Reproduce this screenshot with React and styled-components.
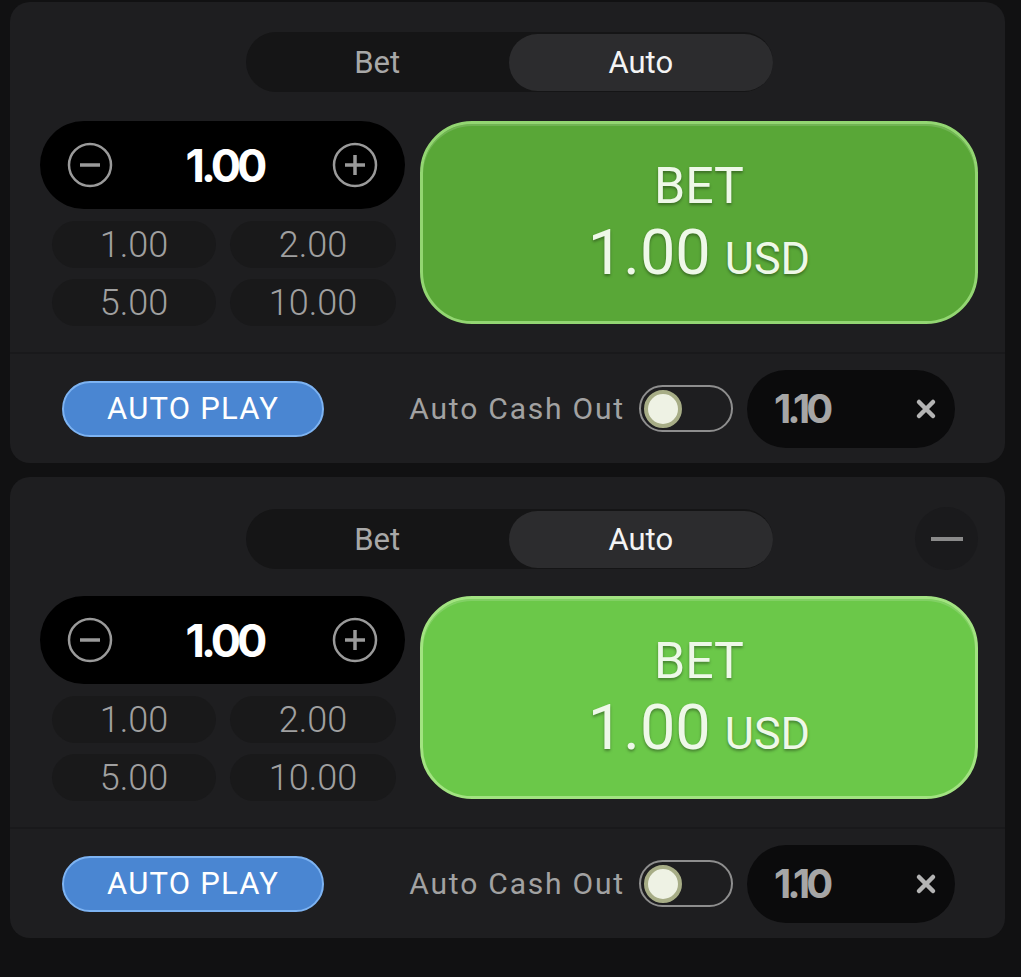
import React from 'react';
import styled, { createGlobalStyle } from 'styled-components';

const GlobalStyle = createGlobalStyle`
	html, body {
		margin: 0;
		padding: 0;
		background: #111112;
	}
	body {
		font-family: Roboto, "Liberation Sans", Arial, sans-serif;
	}
`;

const Page = styled.div`
	width: 1021px;
	height: 977px;
	padding: 2px 16px 0 10px;
	box-sizing: border-box;
	display: flex;
	flex-direction: column;
	gap: 14px;
`;

const Panel = styled.div`
	background: #1e1e20;
	border-radius: 20px;
	display: flex;
	flex-direction: column;
	overflow: hidden;
`;

const PanelTop = styled.div`
	padding: 30px 27px 26px 30px;
	display: flex;
	flex-direction: column;
	gap: 29px;
	border-bottom: 2px solid #19191b;
`;

const TabRow = styled.div`
	display: grid;
	grid-template-columns: 1fr 527px 1fr;
	align-items: center;
	height: 60px;
`;

const Tabs = styled.div`
	grid-column: 2;
	display: grid;
	grid-template-columns: 1fr 1fr;
	height: 60px;
	padding: 2px 0 1px;
	box-sizing: border-box;
	background: #151516;
	border-radius: 30px;
`;

const Tab = styled.div`
	display: flex;
	align-items: center;
	justify-content: center;
	border-radius: 29px;
	font-size: 31px;
	color: ${(p) => (p.$active ? '#f4f4f4' : '#a8a8a8')};
	background: ${(p) => (p.$active ? '#2c2c2e' : 'transparent')};
`;

const Collapse = styled.div`
	grid-column: 3;
	justify-self: end;
	width: 63px;
	height: 63px;
	border-radius: 50%;
	background: #1a1a1c;
	display: flex;
	align-items: center;
	justify-content: center;

	&::after {
		content: '';
		width: 32px;
		height: 4px;
		background: #8a8a8a;
	}
`;

const BetArea = styled.div`
	display: flex;
	gap: 15px;
`;

const LeftCol = styled.div`
	width: 365px;
	display: flex;
	flex-direction: column;
	gap: 12px;
`;

const Stepper = styled.div`
	height: 88px;
	background: #000;
	border-radius: 44px;
	display: flex;
	align-items: center;
	justify-content: space-between;
	padding: 0 27px;
`;

const Amount = styled.div`
	font-family: Inter, Roboto, sans-serif;
	font-weight: 700;
	font-size: 45px;
	letter-spacing: -4px;
	color: #fff;
	margin-left: 4px;
`;

const QuickGrid = styled.div`
	display: grid;
	grid-template-columns: 164px 166px;
	column-gap: 14px;
	row-gap: 11px;
	padding-left: 12px;
`;

const Quick = styled.div`
	height: 47px;
	border-radius: 24px;
	background: #19191a;
	display: flex;
	align-items: center;
	justify-content: center;
	font-size: 36px;
	font-weight: 300;
	color: #a0a0a0;
`;

const BetButton = styled.div`
	flex: 1;
	height: 203px;
	box-sizing: border-box;
	border-radius: 52px;
	background: ${(p) => p.$bg};
	border: 3px solid ${(p) => p.$edge};
	box-shadow: inset 0 2px 0 rgba(255, 255, 255, 0.15);
	display: flex;
	flex-direction: column;
	align-items: center;
	justify-content: center;
	color: #eef8e8;
	text-shadow: 0 2px 3px rgba(0, 0, 0, 0.35);
	line-height: 1;
`;

const BetLabel = styled.div`
	font-size: 50px;
	margin-bottom: 10px;
`;

const BetValue = styled.div`
	font-size: 63px;

	span {
		font-size: 45px;
		margin-left: 14px;
	}
`;

const PanelBottom = styled.div`
	height: 109px;
	display: flex;
	align-items: center;
	padding: 0 50px 0 52px;
`;

const AutoPlay = styled.div`
	width: 262px;
	height: 56px;
	box-sizing: border-box;
	border-radius: 28px;
	background: #4a86d2;
	border: 2px solid #7db3f2;
	display: flex;
	align-items: center;
	justify-content: center;
	color: #fff;
	font-size: 31px;
	letter-spacing: 1.2px;
`;

const CashLabel = styled.div`
	margin-left: auto;
	font-size: 30px;
	letter-spacing: 1.8px;
	color: #a2a2a2;
`;

const Toggle = styled.div`
	margin-left: 14px;
	width: 94px;
	height: 47px;
	box-sizing: border-box;
	border-radius: 24px;
	border: 2px solid #8e8e8e;
	display: flex;
	align-items: center;
	padding-left: 3px;

	&::before {
		content: '';
		width: 38px;
		height: 38px;
		box-sizing: border-box;
		border-radius: 50%;
		background: #eef2e4;
		border: 4px solid #a7ad86;
	}
`;

const CashInput = styled.div`
	margin-left: 14px;
	width: 208px;
	height: 78px;
	border-radius: 39px;
	background: #0b0b0c;
	display: flex;
	align-items: center;
	justify-content: space-between;
	padding: 0 18px 0 27px;
	box-sizing: border-box;
`;

const CashValue = styled.div`
	font-family: Inter, Roboto, sans-serif;
	font-weight: 700;
	font-size: 40px;
	letter-spacing: -4px;
	color: #a6a6a6;
`;

const CircleIcon = ({ plus }) => (
	<svg width="46" height="46" viewBox="0 0 46 46">
		<circle cx="23" cy="23" r="21" fill="none" stroke="#9a9a9a" strokeWidth="2.5" />
		<line x1="13" y1="23" x2="33" y2="23" stroke="#9a9a9a" strokeWidth="3.5" />
		{plus && <line x1="23" y1="13" x2="23" y2="33" stroke="#9a9a9a" strokeWidth="3.5" />}
	</svg>
);

const ClearIcon = () => (
	<svg width="22" height="22" viewBox="0 0 22 22">
		<path d="M4 4 L18 18 M18 4 L4 18" stroke="#b4b4b4" strokeWidth="4.5" strokeLinecap="round" />
	</svg>
);

const quickValues = ['1.00', '2.00', '5.00', '10.00'];

const BetPanel = ({ green, edge, collapsible }) => (
	<Panel>
		<PanelTop>
			<TabRow>
				<Tabs>
					<Tab>Bet</Tab>
					<Tab $active>Auto</Tab>
				</Tabs>
				{collapsible && <Collapse />}
			</TabRow>
			<BetArea>
				<LeftCol>
					<Stepper>
						<CircleIcon />
						<Amount>1.00</Amount>
						<CircleIcon plus />
					</Stepper>
					<QuickGrid>
						{quickValues.map((v) => (
							<Quick key={v}>{v}</Quick>
						))}
					</QuickGrid>
				</LeftCol>
				<BetButton $bg={green} $edge={edge}>
					<BetLabel>BET</BetLabel>
					<BetValue>
						1.00<span>USD</span>
					</BetValue>
				</BetButton>
			</BetArea>
		</PanelTop>
		<PanelBottom>
			<AutoPlay>AUTO PLAY</AutoPlay>
			<CashLabel>Auto Cash Out</CashLabel>
			<Toggle />
			<CashInput>
				<CashValue>1.10</CashValue>
				<ClearIcon />
			</CashInput>
		</PanelBottom>
	</Panel>
);

const App = () => (
	<>
		<GlobalStyle />
		<Page>
			<BetPanel green="#59a737" edge="#93d672" />
			<BetPanel green="#6bc849" edge="#a2e381" collapsible />
		</Page>
	</>
);

export default App;
